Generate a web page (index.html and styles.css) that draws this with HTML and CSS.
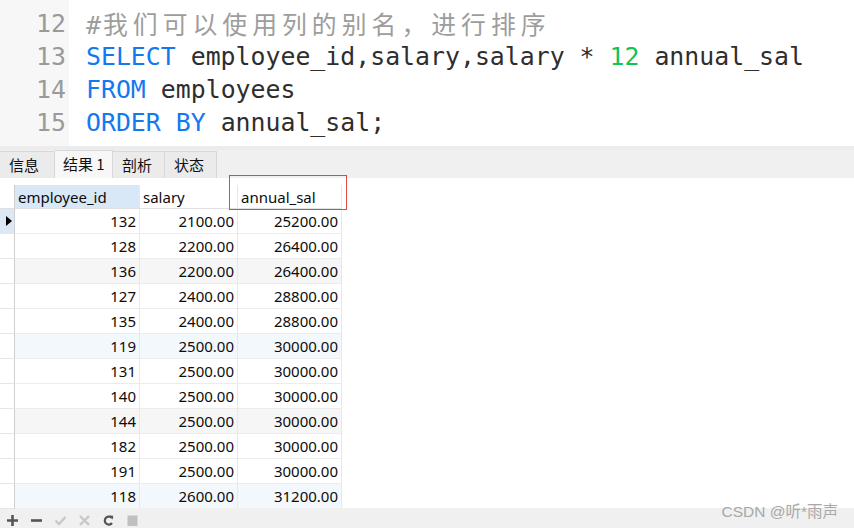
FILE: index.html
```html
<!DOCTYPE html>
<html>
<head>
<meta charset="utf-8">
<link rel="stylesheet" href="styles.css">
</head>
<body>
<div class="app">
  <div class="editor">
    <div class="gutter">
      <div class="ln">12</div>
      <div class="ln">13</div>
      <div class="ln">14</div>
      <div class="ln">15</div>
      <div class="ln">16</div>
    </div>
    <div class="code">
      <div class="line"><span class="cm">#<span class="cjk">我们可以使用列的别名，进行排序</span></span></div>
      <div class="line"><span class="kw">SELECT</span> employee_id,salary,salary * <span class="num">12</span> annual_sal</div>
      <div class="line"><span class="kw">FROM</span> employees</div>
      <div class="line"><span class="kw">ORDER BY</span> annual_sal;</div>
      <div class="line"></div>
    </div>
  </div>
  <div class="sep"></div>
  <div class="tabs">
    <div class="tab">信息</div>
    <div class="tab active">结果 1</div>
    <div class="tab">剖析</div>
    <div class="tab">状态</div>
  </div>
  <div class="results">
    <div class="grid">
      <div class="row head">
        <div class="ind"></div>
        <div class="cell c1 hsel">employee_id</div>
        <div class="cell c2">salary</div>
        <div class="cell c3">annual_sal</div>
      </div>
      <div class="row"><div class="ind cur"><span class="arrow"></span></div><div class="cell c1 n">132</div><div class="cell c2 n">2100.00</div><div class="cell c3 n">25200.00</div></div>
      <div class="row"><div class="ind"></div><div class="cell c1 n">128</div><div class="cell c2 n">2200.00</div><div class="cell c3 n">26400.00</div></div>
      <div class="row gray"><div class="ind"></div><div class="cell c1 n">136</div><div class="cell c2 n">2200.00</div><div class="cell c3 n">26400.00</div></div>
      <div class="row"><div class="ind"></div><div class="cell c1 n">127</div><div class="cell c2 n">2400.00</div><div class="cell c3 n">28800.00</div></div>
      <div class="row"><div class="ind"></div><div class="cell c1 n">135</div><div class="cell c2 n">2400.00</div><div class="cell c3 n">28800.00</div></div>
      <div class="row blue"><div class="ind"></div><div class="cell c1 n">119</div><div class="cell c2 n">2500.00</div><div class="cell c3 n">30000.00</div></div>
      <div class="row"><div class="ind"></div><div class="cell c1 n">131</div><div class="cell c2 n">2500.00</div><div class="cell c3 n">30000.00</div></div>
      <div class="row"><div class="ind"></div><div class="cell c1 n">140</div><div class="cell c2 n">2500.00</div><div class="cell c3 n">30000.00</div></div>
      <div class="row gray"><div class="ind"></div><div class="cell c1 n">144</div><div class="cell c2 n">2500.00</div><div class="cell c3 n">30000.00</div></div>
      <div class="row"><div class="ind"></div><div class="cell c1 n">182</div><div class="cell c2 n">2500.00</div><div class="cell c3 n">30000.00</div></div>
      <div class="row"><div class="ind"></div><div class="cell c1 n">191</div><div class="cell c2 n">2500.00</div><div class="cell c3 n">30000.00</div></div>
      <div class="row blue"><div class="ind"></div><div class="cell c1 n">118</div><div class="cell c2 n">2600.00</div><div class="cell c3 n">31200.00</div></div>
    </div>
    <div class="mark"></div>
  </div>
  <div class="toolbar">
    <svg class="ic" width="11" height="11" viewBox="0 0 11 11"><path d="M5.5 0V11M0 5.5H11" stroke="#555" stroke-width="2.6"/></svg>
    <svg class="ic" width="11" height="11" viewBox="0 0 11 11"><path d="M0 5.5H11" stroke="#555" stroke-width="2.6"/></svg>
    <svg class="ic" width="11" height="11" viewBox="0 0 11 11"><path d="M0.5 5.5L4 9L10.5 2" fill="none" stroke="#c8c8c8" stroke-width="2.4"/></svg>
    <svg class="ic" width="11" height="11" viewBox="0 0 11 11"><path d="M1 1L10 10M10 1L1 10" stroke="#c8c8c8" stroke-width="2.4"/></svg>
    <svg class="ic" width="11" height="11" viewBox="0 0 11 11"><path d="M9 3.2A4 4 0 1 0 9 8" fill="none" stroke="#555" stroke-width="2.2"/><path d="M6.5 0.5L10.2 0.8L9.8 4.5Z" fill="#555"/></svg>
    <svg class="ic" width="11" height="11" viewBox="0 0 11 11"><rect x="0.5" y="0.5" width="10" height="12" fill="#c0c0c0"/></svg>
  </div>
  <div class="watermark">CSDN @听*雨声</div>
</div>
</body>
</html>
```

FILE: styles.css
```css
* { box-sizing: border-box; }
html, body { margin: 0; padding: 0; }
body {
  width: 854px;
  height: 528px;
  overflow: hidden;
  background: #ffffff;
  font-family: "Noto Sans", "Noto Sans CJK SC", sans-serif;
}
.app {
  position: relative;
  width: 854px;
  height: 528px;
  display: flex;
  flex-direction: column;
}
.editor {
  height: 146px;
  flex: none;
  display: flex;
  overflow: hidden;
  font-family: "DejaVu Sans Mono", monospace;
  font-size: 24.85px;
  line-height: 33px;
}
.gutter {
  width: 69px;
  background: #f7f7f7;
  color: #9a9a9a;
  text-align: right;
  padding: 7px 3px 0 0;
}
.code {
  flex: 1;
  padding: 7px 0 0 17px;
  color: #2e2e2e;
}
.line {
  height: 33px;
  white-space: pre;
}
.kw { color: #1478ef; }
.num { color: #10c35a; }
.cm { color: #9d9d9d; }
.cjk {
  font-family: "Noto Sans CJK SC", sans-serif;
  letter-spacing: 5px;
  margin-left: 2px;
}
.sep {
  height: 4px;
  flex: none;
  background: #ececec;
}
.tabs {
  height: 28px;
  flex: none;
  background: #f0f0f0;
  display: flex;
  align-items: flex-end;
  font-family: "Noto Sans CJK SC", sans-serif;
  font-size: 15px;
  color: #111;
}
.tab {
  height: 27px;
  width: 52px;
  padding-left: 9px;
  line-height: 26px;
  background: #ebebeb;
  border: 1px solid #d8d8d8;
  border-bottom: none;
  border-left: none;
}
.tab:first-child { width: 55px; }
.tab.active {
  width: 58px;
  height: 28px;
  padding-left: 8px;
  line-height: 25px;
  background: #f7f7f7;
}
.results {
  height: 330px;
  flex: none;
  background: #ffffff;
  padding-top: 7px;
}
.grid {
  display: flex;
  flex-direction: column;
  font-size: 15px;
  color: #0c0c0c;
}
.row {
  display: flex;
  height: 25px;
}
.row.head { height: 24px; }
.ind {
  width: 15px;
  border-right: 1px solid #cfcfcf;
  border-bottom: 1px solid #e6e6e6;
  position: relative;
}
.head .ind { border-bottom: 1px solid #e0e0e0; }
.ind.cur { background: #dce8f6; }
.arrow {
  position: absolute;
  left: 6px;
  top: 7px;
  width: 0;
  height: 0;
  border-top: 5px solid transparent;
  border-bottom: 5px solid transparent;
  border-left: 6px solid #000;
}
.cell {
  border-right: 1px solid #e8e8e8;
  border-bottom: 1px solid #ececec;
  line-height: 25px;
  white-space: nowrap;
}
.head .cell {
  padding-left: 3px;
  line-height: 24px;
  border-bottom: 1px solid #e0e0e0;
}
.hsel { background: #d9e8f7; }
.c1 { width: 125px; }
.c2 { width: 98px; }
.c3 { width: 104px; }
.n {
  text-align: right;
  padding-right: 3px;
}
.row.gray .cell { background: #f6f6f6; }
.row.blue .cell { background: #f3f8fd; }
.mark {
  position: absolute;
  left: 229px;
  top: 175px;
  width: 118px;
  height: 35px;
  border: 1px solid #e04848;
}
.toolbar {
  height: 20px;
  flex: none;
  background: #f0f0f0;
  display: flex;
  gap: 13px;
  padding: 7px 0 0 7px;
  overflow: hidden;
}
.ic { flex: none; }
.watermark {
  position: absolute;
  right: 16px;
  top: 499px;
  font-family: "Liberation Sans", "Noto Sans CJK SC", sans-serif;
  font-size: 15.5px;
  color: #a8a8a8;
}
```
